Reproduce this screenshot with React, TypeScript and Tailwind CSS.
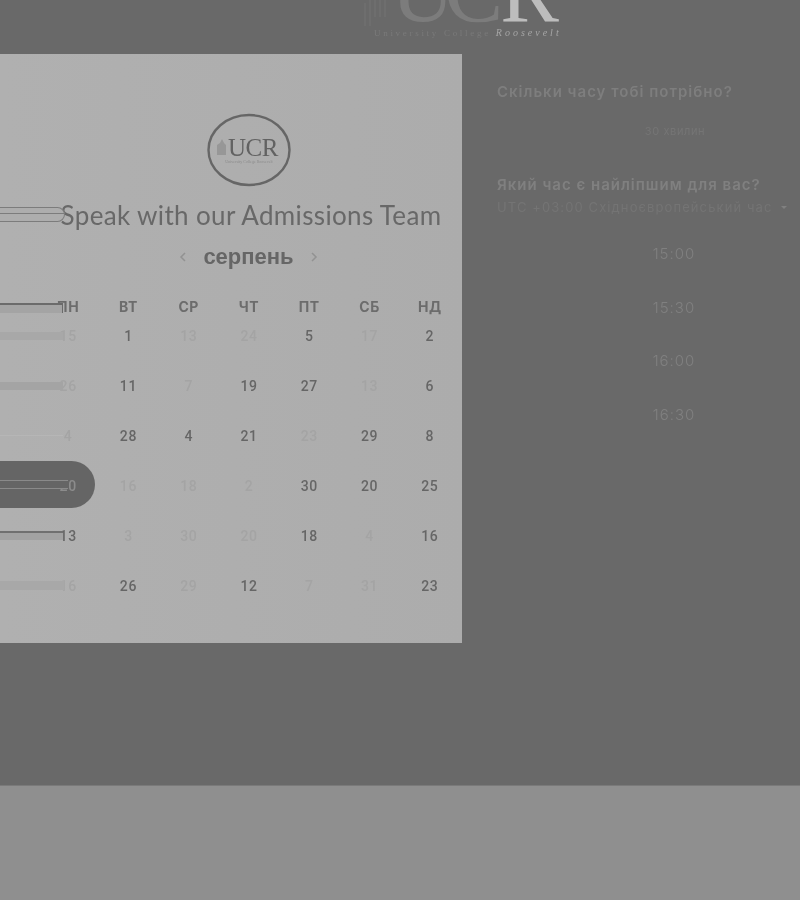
const HEADERS = ['ПН', 'ВТ', 'СР', 'ЧТ', 'ПТ', 'СБ', 'НД'];

// [day, available]
const ROWS: [number, boolean][][] = [
  [[15, false], [1, true], [13, false], [24, false], [5, true], [17, false], [2, true]],
  [[26, false], [11, true], [7, false], [19, true], [27, true], [13, false], [6, true]],
  [[4, false], [28, true], [4, true], [21, true], [23, false], [29, true], [8, true]],
  [[20, false], [16, false], [18, false], [2, false], [30, true], [20, true], [25, true]],
  [[13, true], [3, false], [30, false], [20, false], [18, true], [4, false], [16, true]],
  [[16, false], [26, true], [29, false], [12, true], [7, false], [31, false], [23, true]],
];

const TIMES = ['15:00', '15:30', '16:00', '16:30'];

function dayColor(on: boolean, selected: boolean) {
  if (selected) return 'text-center text-[#8c8c8c]';
  return on ? 'text-center text-[#666666]' : 'text-center text-[#a4a4a4]';
}

function TopLogo() {
  return (
    <div className="h-[54px] overflow-hidden pl-[363px] blur-[0.6px]">
      <div className="mt-[-43px] flex h-[69px] items-start">
        <svg width="28" height="69" viewBox="0 0 28 69" fill="none" stroke="#747474" strokeWidth="1">
          <path d="M2 69V46M7 69V40M12 60V40M17 60V40M22 60V40" />
        </svg>
        <span className="font-['Liberation_Serif',serif] text-[88px] leading-[69px] tracking-[-10px] text-[#7c7c7c]">UC</span>
        <span className="ml-[7px] font-['Liberation_Serif',serif] text-[88px] leading-[69px] text-[#bdbdbd]">R</span>
      </div>
      <div className="mt-px ml-[11px] whitespace-nowrap font-['Liberation_Serif',serif] text-[9px] leading-[12px] tracking-[2.7px]">
        <span className="text-[#7a7a7a]">University College </span>
        <span className="text-[10px] tracking-[3px] text-[#a6a6a6] italic">Roosevelt</span>
      </div>
    </div>
  );
}

function CardLogo() {
  return (
    <svg width="84" height="74" viewBox="0 0 84 74" className="mx-auto block">
      <ellipse cx="42" cy="37" rx="40.5" ry="35" fill="none" stroke="#666666" strokeWidth="2.4" />
      <path d="M10 42V32l3-2 2-4 2 4 2 2v10z" fill="#979797" />
      <text x="21" y="43" fontFamily="Liberation Serif, serif" fontSize="25" letterSpacing="-0.5" fill="#626262">UCR</text>
      <text x="42" y="50" textAnchor="middle" fontFamily="Liberation Serif, serif" fontSize="4" fill="#8c8c8c">University College Roosevelt</text>
    </svg>
  );
}

function Calendar() {
  return (
    <div className="relative h-[589px] w-[462px] shrink-0 overflow-hidden bg-gradient-to-r from-[#b0b0b0] to-[#acacac] pt-[59px]">
      {/* selected day, sits under the numbers */}
      <div className="absolute left-[-40px] top-[407px] h-[47px] w-[135px] rounded-full bg-[#656565] blur-[0.4px]" />

      <div className="relative blur-[0.5px]">
        <div className="pl-[35px]">
          <CardLogo />
        </div>
        <div className="mt-[13px] h-[30px] pl-[40px] text-center font-['Lato',sans-serif] text-[26px] leading-[30px] tracking-[0.35px] whitespace-nowrap text-[#686868]">
          Speak with our Admissions Team
        </div>
        <div className="mt-[12px] flex h-[30px] items-center justify-center gap-[16px] pl-[35px]">
          <svg width="8" height="10" viewBox="0 0 8 10" fill="none" stroke="#929292" strokeWidth="1.5"><path d="M6 1L2 5l4 4" /></svg>
          <span className="font-['Liberation_Sans',sans-serif] text-[22px] leading-[30px] font-bold text-[#666666]">серпень</span>
          <svg width="8" height="10" viewBox="0 0 8 10" fill="none" stroke="#929292" strokeWidth="1.5"><path d="M2 1l4 4-4 4" /></svg>
        </div>
        <div className="mt-[24px] grid h-[22px] grid-cols-7 pl-[38px] pr-[2px] font-['Inter',sans-serif] text-[14px] leading-[22px] font-bold tracking-[0.6px] text-[#6c6c6c]">
          {HEADERS.map((h) => (
            <div key={h} className="text-center">{h}</div>
          ))}
        </div>
        <div className="mt-[4px] pl-[38px] pr-[2px] font-['Roboto',sans-serif] text-[14px] leading-[28px] font-medium tracking-[0.6px]">
          {ROWS.map((row, i) => (
            <div key={i} className="grid h-[50px] grid-cols-7">
              {row.map(([day, on], j) => (
                <div key={j} className={dayColor(on, i === 3 && j === 0)}>{day}</div>
              ))}
            </div>
          ))}
        </div>
      </div>

      {/* ghosted leftovers from the page behind the overlay */}
      <div className="absolute left-0 top-[153px] flex w-[68px] flex-col blur-[0.4px]">
        <div className="h-[15px] w-[65px] rounded-r-[8px] border-y border-r border-[#7c7c7c] bg-[#adadad]">
          <div className="mt-[5px] h-px bg-[#7c7c7c]" />
        </div>
        <div className="mt-[81px] h-[10px] w-[63px] border-t-2 border-r border-[#6b6b6b] bg-[#a4a4a4]" />
        <div className="mt-[19px] h-[8px] w-[63px] bg-[#a8a8a8]" />
        <div className="mt-[42px] h-[8px] w-[63px] bg-[#a4a4a4]" />
        <div className="mt-[45px] h-px w-[63px] bg-[#b6b6b6]" />
        <div className="mt-[44px] h-[9px] w-[68px] border-y border-[#8a8a8a] bg-[#656565]" />
        <div className="mt-[42px] h-[9px] w-[63px] border-t-2 border-[#707070] bg-[#a2a2a2]" />
        <div className="mt-[41px] h-[9px] w-[64px] bg-[#a8a8a8]" />
      </div>
    </div>
  );
}

function Sidebar() {
  return (
    <div className="flex-1 pl-[35px] font-['Inter',sans-serif] blur-[0.5px]">
      <div className="mt-[28px] text-[15px] leading-[20px] font-semibold tracking-[1px] whitespace-nowrap text-[#7e7e7e]">
        Скільки часу тобі потрібно?
      </div>
      <div className="mt-[21px] w-[356px] text-center text-[11px] leading-[16px] tracking-[0.6px] text-[#757575]">
        30 хвилин
      </div>
      <div className="mt-[36px] text-[15px] leading-[20px] font-semibold tracking-[1px] whitespace-nowrap text-[#808080]">
        Який час є найліпшим для вас?
      </div>
      <div className="mt-[3px] flex items-center text-[13px] leading-[18px] tracking-[1.1px] whitespace-nowrap text-[#747474]">
        UTC +03:00 Східноєвропейський час
        <span className="ml-[8px] h-0 w-0 border-x-[3px] border-t-[3px] border-x-transparent border-t-[#808080]" />
      </div>
      <div className="mt-[28px] flex w-[354px] flex-col items-center">
        {TIMES.map((t) => (
          <div key={t} className="flex h-[53.6px] items-start text-[15px] leading-[20px] font-light tracking-[1px] text-[#808080]">
            {t}
          </div>
        ))}
      </div>
    </div>
  );
}

export default function App() {
  return (
    <div className="h-[900px] w-[800px] overflow-hidden bg-[#8f8f8f]">
      <div className="h-[786px] border-b border-[#7a7a7a] bg-[#696969]">
        <TopLogo />
        <div className="flex">
          <Calendar />
          <Sidebar />
        </div>
      </div>
    </div>
  );
}
